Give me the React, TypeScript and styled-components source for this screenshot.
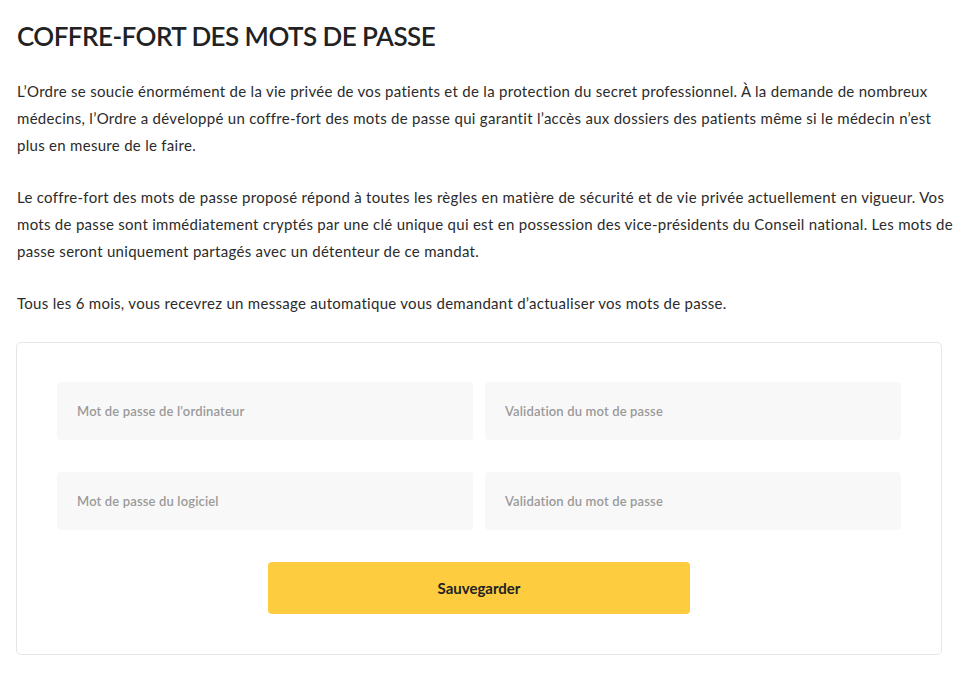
import React from "react";
import styled, { createGlobalStyle } from "styled-components";

const Global = createGlobalStyle`
  html, body { margin: 0; padding: 0; background: #ffffff; }
  body { font-family: Lato, "Open Sans", sans-serif; color: #2b2b2b; }
  * { box-sizing: border-box; }
`;

const Page = styled.main`
  padding: 21px 10px 0 17px;
`;

const Title = styled.h1`
  margin: 0 0 27px 0;
  font-size: 26px;
  line-height: 30px;
  font-weight: 600;
  color: #222222;
  letter-spacing: -0.55px;
`;

const Paragraph = styled.p`
  margin: 0 0 25px 0;
  font-size: 15px;
  line-height: 27px;
  color: #2b2b2b;
  letter-spacing: 0.29px;
`;

const Card = styled.form`
  width: 926px;
  margin-left: -1px;
  margin-top: 12px;
  border: 1px solid #e6e6e6;
  border-radius: 5px;
  padding: 39px 40px 40px 40px;
  display: flex;
  flex-direction: column;
  align-items: center;
  gap: 32px;
`;

const FieldRow = styled.div`
  width: 100%;
  display: grid;
  grid-template-columns: 1fr 1fr;
  gap: 12px;
`;

const Field = styled.input`
  height: 58px;
  border: none;
  outline: none;
  border-radius: 4px;
  background: #f8f8f8;
  padding: 0 20px;
  font-family: Lato, "Open Sans", sans-serif;
  font-size: 13px;
  font-weight: 600;
  letter-spacing: 0.15px;
  color: #333;
  &::placeholder { color: #9a9a9a; }
`;

const SaveButton = styled.button`
  width: 422px;
  height: 52px;
  border: none;
  border-radius: 4px;
  background: #fecd3f;
  font-family: Lato, "Open Sans", sans-serif;
  font-size: 15px;
  font-weight: 700;
  color: #222222;
  cursor: pointer;
`;

export default function App() {
  return (
    <>
      <Global />
      <Page>
        <Title>COFFRE-FORT DES MOTS DE PASSE</Title>
        <Paragraph>
          L’Ordre se soucie énormément de la vie privée de vos patients et de la protection du secret professionnel. À la demande de nombreux médecins, l’Ordre a développé un coffre-fort des mots de passe qui garantit l’accès aux dossiers des patients même si le médecin n’est plus en mesure de le faire.
        </Paragraph>
        <Paragraph>
          Le coffre-fort des mots de passe proposé répond à toutes les règles en matière de sécurité et de vie privée actuellement en vigueur. Vos mots de passe sont immédiatement cryptés par une clé unique qui est en possession des vice-présidents du Conseil national. Les mots de passe seront uniquement partagés avec un détenteur de ce mandat.
        </Paragraph>
        <Paragraph>
          Tous les 6 mois, vous recevrez un message automatique vous demandant d’actualiser vos mots de passe.
        </Paragraph>
        <Card onSubmit={(e) => e.preventDefault()}>
          <FieldRow>
            <Field type="password" placeholder="Mot de passe de l'ordinateur" />
            <Field type="password" placeholder="Validation du mot de passe" />
          </FieldRow>
          <FieldRow>
            <Field type="password" placeholder="Mot de passe du logiciel" />
            <Field type="password" placeholder="Validation du mot de passe" />
          </FieldRow>
          <SaveButton type="submit">Sauvegarder</SaveButton>
        </Card>
      </Page>
    </>
  );
}
